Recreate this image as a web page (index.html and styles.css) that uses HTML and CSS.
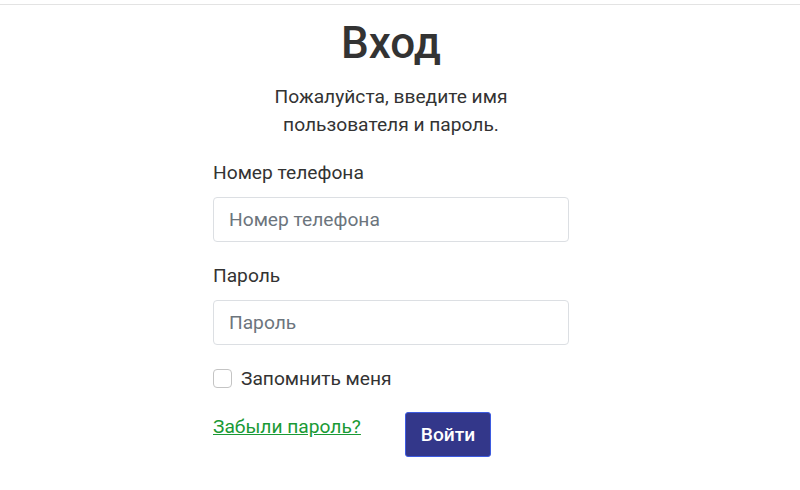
FILE: index.html
```html
<!DOCTYPE html>
<html lang="ru">
<head>
<meta charset="utf-8">
<title>Вход</title>
<link rel="stylesheet" href="styles.css">
</head>
<body>
<div class="topline"></div>
<main class="page">
  <section class="login">
    <h1 class="title">Вход</h1>
    <p class="subtitle">Пожалуйста, введите имя пользователя и пароль.</p>
    <form class="form">
      <label class="label" for="phone">Номер телефона</label>
      <input class="input" id="phone" type="text" placeholder="Номер телефона">
      <label class="label" for="pass">Пароль</label>
      <input class="input" id="pass" type="password" placeholder="Пароль">
      <label class="check">
        <span class="box"></span>
        <span class="check-text">Запомнить меня</span>
      </label>
      <div class="actions">
        <a class="forgot" href="#">Забыли пароль?</a>
        <button class="btn" type="button">Войти</button>
      </div>
    </form>
  </section>
</main>
</body>
</html>
```
FILE: styles.css
```css
html, body {
  margin: 0;
  padding: 0;
  background: #fff;
}
body {
  font-family: Roboto, "Noto Sans", sans-serif;
  color: #333;
}
.topline {
  margin-top: 4px;
  height: 1px;
  background: #e3e3e3;
}
.page {
  display: flex;
  justify-content: center;
  padding-right: 18px;
}
.login {
  width: 356px;
  display: flex;
  flex-direction: column;
  align-items: center;
}
.title {
  margin: 12px 0 0;
  font-size: 44px;
  font-weight: 500;
  line-height: 52px;
  color: #333;
}
.subtitle {
  margin: 14px 0 0;
  width: 270px;
  text-align: center;
  font-size: 19.2px;
  line-height: 28px;
  color: #333;
}
.form {
  align-self: stretch;
  display: flex;
  flex-direction: column;
  margin-top: 19px;
}
.label {
  font-size: 19.2px;
  line-height: 29px;
  color: #333;
  margin-bottom: 10px;
}
.input {
  box-sizing: border-box;
  height: 45px;
  padding: 0 15px;
  border: 1px solid #dcdfe3;
  border-radius: 4px;
  font-family: inherit;
  font-size: 19.2px;
  color: #333;
  margin-bottom: 19px;
}
.input::placeholder {
  color: #6c757d;
}
.check {
  display: flex;
  align-items: center;
  gap: 9px;
  margin-top: 0;
}
.box {
  box-sizing: border-box;
  width: 19px;
  height: 19px;
  border: 1px solid #c4c4c4;
  border-radius: 4px;
}
.check-text {
  font-size: 19.2px;
  line-height: 29px;
  color: #333;
}
.actions {
  display: flex;
  align-items: flex-start;
  margin-top: 19px;
}
.forgot {
  margin-top: 1px;
  font-size: 19.2px;
  line-height: 28px;
  color: #1a9a35;
  text-decoration: underline;
  width: 192px;
}
.btn {
  box-sizing: border-box;
  width: 86px;
  height: 45px;
  background: #33378a;
  border: 1px solid #3d5be0;
  border-radius: 3px;
  color: #fff;
  font-family: inherit;
  font-size: 19.2px;
  font-weight: 500;
}
```
